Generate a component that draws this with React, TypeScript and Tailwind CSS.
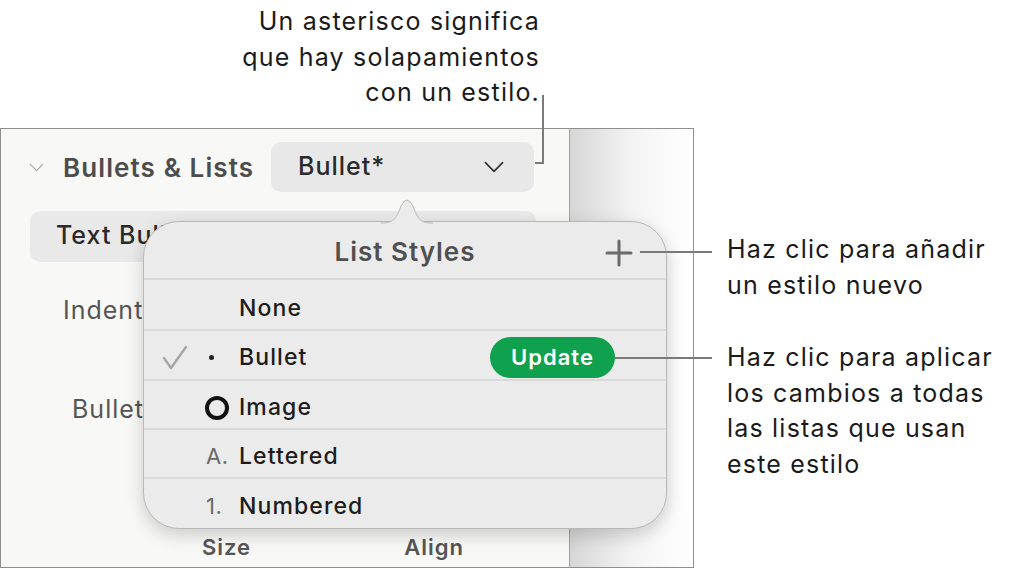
import React from 'react'

const rows = [
  { name: 'None', mark: '', h: 'h-[51px] pt-[8px]' },
  { name: 'Bullet', mark: 'dot', h: 'h-[50px] pt-[5px]' },
  { name: 'Image', mark: 'ring', h: 'h-[49px] pt-[6px]' },
  { name: 'Lettered', mark: 'A.', h: 'h-[49px] pt-[6px]' },
  { name: 'Numbered', mark: '1.', h: 'h-[49px] pt-[5px]' },
]

function Chevron({ className }: { className?: string }) {
  return (
    <svg viewBox="0 0 24 14" className={className} fill="none" stroke="currentColor" strokeWidth="2" strokeLinecap="round" strokeLinejoin="round">
      <path d="M2 2 L12 12 L22 2" />
    </svg>
  )
}

function ListStyles() {
  return (
    <div className="absolute left-[143px] top-[221px] w-[524px] h-[308px] rounded-[36px] bg-[#ebebeb] border border-[#b8b8b8] shadow-[0_6px_18px_rgba(0,0,0,0.18)]">
      {/* notch pointing to the popup button */}
      <svg className="absolute left-[237px] top-[-24px]" width="52" height="26" viewBox="0 0 52 26">
        <path d="M0 25 C 12 25 15 22 20 8 Q 26 -4 32 8 C 37 22 40 25 52 25 L52 26 L0 26 Z" fill="#ebebeb" />
        <path d="M0 25 C 12 25 15 22 20 8 Q 26 -4 32 8 C 37 22 40 25 52 25" fill="none" stroke="#b8b8b8" strokeWidth="1" />
      </svg>
      <div className="relative h-[58px] flex items-center justify-center border-b-2 border-[#d9d9d9] pt-[2px]">
        <span className="text-[26px] font-semibold text-[#505050] tracking-[1px]">List Styles</span>
        <svg className="absolute right-[33px] top-[17px]" width="28" height="28" viewBox="0 0 28 28" stroke="#6b6b6b" strokeWidth="3" strokeLinecap="round">
          <path d="M14 2 V26 M2 14 H26" />
        </svg>
      </div>
      {rows.map((r, i) => (
        <div key={r.name} className={'relative flex items-center ' + r.h + (i < rows.length - 1 ? ' border-b-2 border-[#d9d9d9]' : '')}>
          <div className="w-[26px] ml-[18px] flex justify-center">
            {r.name === 'Bullet' && (
              <svg width="26" height="25" viewBox="0 0 26 25" fill="none" stroke="#a6a6a6" strokeWidth="2.4" strokeLinecap="round" strokeLinejoin="round">
                <path d="M2 13 L9 23 L24 2" />
              </svg>
            )}
          </div>
          <div className="w-[33px] ml-[18px] flex items-center">
            {r.mark === 'dot' && <span className="block w-[5px] h-[5px] rounded-full bg-[#222] ml-[3px]" />}
            {r.mark === 'ring' && <span className="block w-[24px] h-[24px] rounded-full border-[4px] border-[#111] -ml-[1px]" />}
            {(r.mark === 'A.' || r.mark === '1.') && <span className="text-[22px] text-[#6a6a6a] tracking-[0.5px]">{r.mark}</span>}
          </div>
          <span className="text-[23px] font-medium text-[#1c1c1c] tracking-[1.1px]">{r.name}</span>
          {r.name === 'Bullet' && (
            <div className="absolute left-[346px] top-[6px] w-[125px] h-[41px] rounded-full bg-[#0fa14e] flex items-center justify-center">
              <span className="text-[22px] font-semibold text-white tracking-[1px]">Update</span>
            </div>
          )}
        </div>
      ))}
    </div>
  )
}

export default function App() {
  return (
    <div className="relative w-[1011px] h-[569px] bg-white overflow-hidden" style={{ fontFamily: 'Inter, "Noto Sans", sans-serif' }}>
      {/* top callout */}
      <div className="w-[540px] pt-[4px] text-right text-[25px] leading-[35.5px] text-[#1a1a1a] tracking-[1.2px]">
        <p>Un asterisco significa</p>
        <p>que hay solapamientos</p>
        <p>con un estilo.</p>
      </div>

      {/* inspector frame */}
      <div className="mt-[17px] w-[694px] h-[440px] border border-[#8f8f8f] flex">
        <div className="w-[569px] h-full bg-[#f8f8f7] border-r border-[#a0a0a0] flex flex-col">
          <div className="flex items-center h-[50px] mt-[13px]">
            <div className="w-[270px] flex items-center pt-[1px]">
              <Chevron className="w-[15px] h-[9px] ml-[28px] text-[#a9a9a9]" />
              <span className="ml-[19px] text-[26px] font-semibold text-[#4d4d4d] tracking-[1.1px]">Bullets &amp; Lists</span>
            </div>
            <div className="w-[263px] h-[50px] rounded-[10px] bg-[#e8e8e8] flex items-center pl-[27px] pr-[29px]">
              <span className="text-[25px] font-medium text-[#2a2a2a] tracking-[1px]">Bullet*</span>
              <Chevron className="ml-auto w-[22px] h-[12px] text-[#333]" />
            </div>
          </div>
          <div className="mt-[19px] ml-[29px] w-[506px] h-[51px] rounded-[10px] bg-[#e9e9e9] flex items-center pl-[26px]">
            <span className="text-[25px] font-medium text-[#2a2a2a] tracking-[1px]">Text Bullets</span>
          </div>
          <div className="mt-[30px] ml-[62px] text-[25px] text-[#555] tracking-[1px]">Indent</div>
          <div className="mt-[62px] ml-[71px] text-[25px] text-[#555] tracking-[1px]">Bullet</div>
          <div className="mt-[102px] flex text-[22px] font-semibold text-[#555] tracking-[1px]">
            <span className="ml-[201px]">Size</span>
            <span className="ml-[153px]">Align</span>
          </div>
        </div>
        <div className="flex-1 h-full bg-gradient-to-r from-[#d6d6d6] via-[#f3f3f3] to-white" />
      </div>

      <ListStyles />

      {/* leader lines */}
      <div className="absolute left-[542px] top-[95px] w-[2px] h-[69px] bg-[#7a7a7a]" />
      <div className="absolute left-[535px] top-[162px] w-[9px] h-[2px] bg-[#7a7a7a]" />
      <div className="absolute left-[640px] top-[251px] w-[72px] h-[2px] bg-[#7a7a7a]" />
      <div className="absolute left-[615px] top-[357px] w-[97px] h-[2px] bg-[#7a7a7a]" />

      {/* right callouts */}
      <div className="absolute left-[727px] top-[232px] text-[25px] leading-[35.5px] text-[#1a1a1a] tracking-[1.2px]">
        <p>Haz clic para añadir</p>
        <p>un estilo nuevo</p>
      </div>
      <div className="absolute left-[727px] top-[340px] text-[25px] leading-[35.5px] text-[#1a1a1a] tracking-[1.2px]">
        <p>Haz clic para aplicar</p>
        <p>los cambios a todas</p>
        <p>las listas que usan</p>
        <p>este estilo</p>
      </div>
    </div>
  )
}
